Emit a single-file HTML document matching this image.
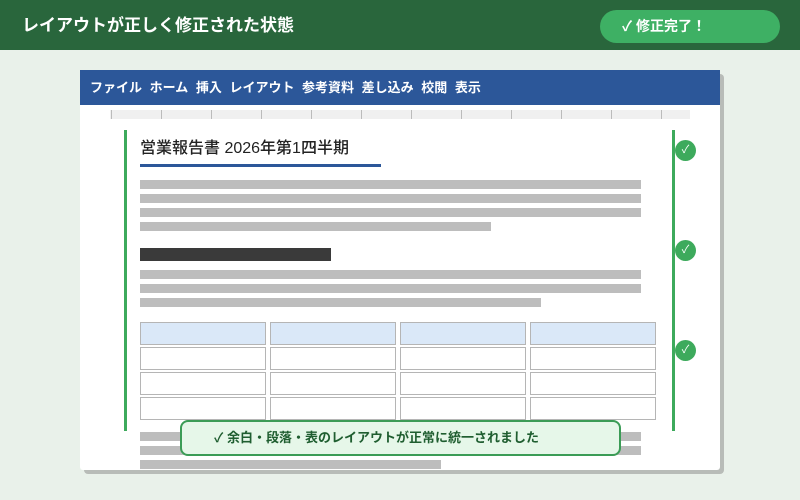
<!DOCTYPE html>
<html><head><meta charset="utf-8"><style>
*{margin:0;padding:0;box-sizing:border-box}
body{width:800px;height:500px;background:#e9f1ea;position:relative;overflow:hidden;font-family:"Liberation Sans","Noto Sans CJK JP",sans-serif}
.a{position:absolute}
.g{position:absolute;background:#bdbdbd;height:9px;left:140px}
.c{position:absolute;border:1px solid #b5b5b5;background:#fff;width:126px;height:23px}
.h{background:#dae8f8}
.ck{position:absolute;left:675px;width:21px;height:21px;border-radius:50%;background:#3daa5c;color:#fff;font-size:11px;text-align:center;line-height:21px}
</style></head><body>
<div class="a" style="left:0;top:0;width:800px;height:50px;background:#29663c"></div>
<div class="a" style="left:22px;top:11px;color:#fff;font-size:17px;font-weight:bold">レイアウトが正しく修正された状態</div>
<div class="a" style="left:600px;top:10px;width:180px;height:33px;border-radius:17px;background:#3eb064;color:#fff;font-size:14px;font-weight:bold;line-height:33px;padding-left:22px">✓ 修正完了！</div>
<div class="a" style="left:84px;top:74px;width:640px;height:400px;background:#b8bcb8;border-radius:4px"></div>
<div class="a" style="left:80px;top:70px;width:640px;height:400px;background:#fff;border-radius:3px"></div>
<div class="a" style="left:80px;top:70px;width:640px;height:35px;background:#2c5799;color:#fff;font-size:13px;font-weight:bold;line-height:35px;padding-left:10px;word-spacing:4px">ファイル ホーム 挿入 レイアウト 参考資料 差し込み 校閲 表示</div>
<div class="a" style="left:110px;top:110px;width:580px;height:9px;background:#f0f0f0;background-image:repeating-linear-gradient(90deg,#bbb 0 1px,transparent 1px 50px);background-position:1px 0;background-size:100% 100%"></div>
<div class="a" style="left:124px;top:130px;width:3px;height:301px;background:#3daa5c"></div>
<div class="a" style="left:672px;top:130px;width:3px;height:301px;background:#3daa5c"></div>
<div class="ck" style="top:140px">✓</div><div class="ck" style="top:240px">✓</div><div class="ck" style="top:340px">✓</div>
<div class="a" style="left:140px;top:134px;font-size:16px;color:#222;font-weight:500">営業報告書 2026年第1四半期</div>
<div class="a" style="left:140px;top:164px;width:241px;height:3px;background:#2c5799"></div>
<div class="g" style="top:180px;width:501px"></div><div class="g" style="top:194px;width:501px"></div><div class="g" style="top:208px;width:501px"></div><div class="g" style="top:222px;width:351px"></div>
<div class="a" style="left:140px;top:248px;width:191px;height:13px;background:#3a3a3a"></div>
<div class="g" style="top:270px;width:501px"></div><div class="g" style="top:284px;width:501px"></div><div class="g" style="top:298px;width:401px"></div>
<div class="c h" style="left:140px;top:322px"></div><div class="c h" style="left:270px;top:322px"></div><div class="c h" style="left:400px;top:322px"></div><div class="c h" style="left:530px;top:322px"></div>
<div class="c" style="left:140px;top:347px"></div><div class="c" style="left:270px;top:347px"></div><div class="c" style="left:400px;top:347px"></div><div class="c" style="left:530px;top:347px"></div>
<div class="c" style="left:140px;top:372px"></div><div class="c" style="left:270px;top:372px"></div><div class="c" style="left:400px;top:372px"></div><div class="c" style="left:530px;top:372px"></div>
<div class="c" style="left:140px;top:397px"></div><div class="c" style="left:270px;top:397px"></div><div class="c" style="left:400px;top:397px"></div><div class="c" style="left:530px;top:397px"></div>
<div class="g" style="top:432px;width:501px"></div><div class="g" style="top:446px;width:501px"></div><div class="g" style="top:460px;width:301px"></div>
<div class="a" style="left:180px;top:420px;width:441px;height:36px;background:#e6f7e9;border:2px solid #3b9c56;border-radius:8px;color:#1f5e30;font-size:13px;font-weight:bold;line-height:31px;padding-left:32px">✓ 余白・段落・表のレイアウトが正常に統一されました</div>
</body></html>
